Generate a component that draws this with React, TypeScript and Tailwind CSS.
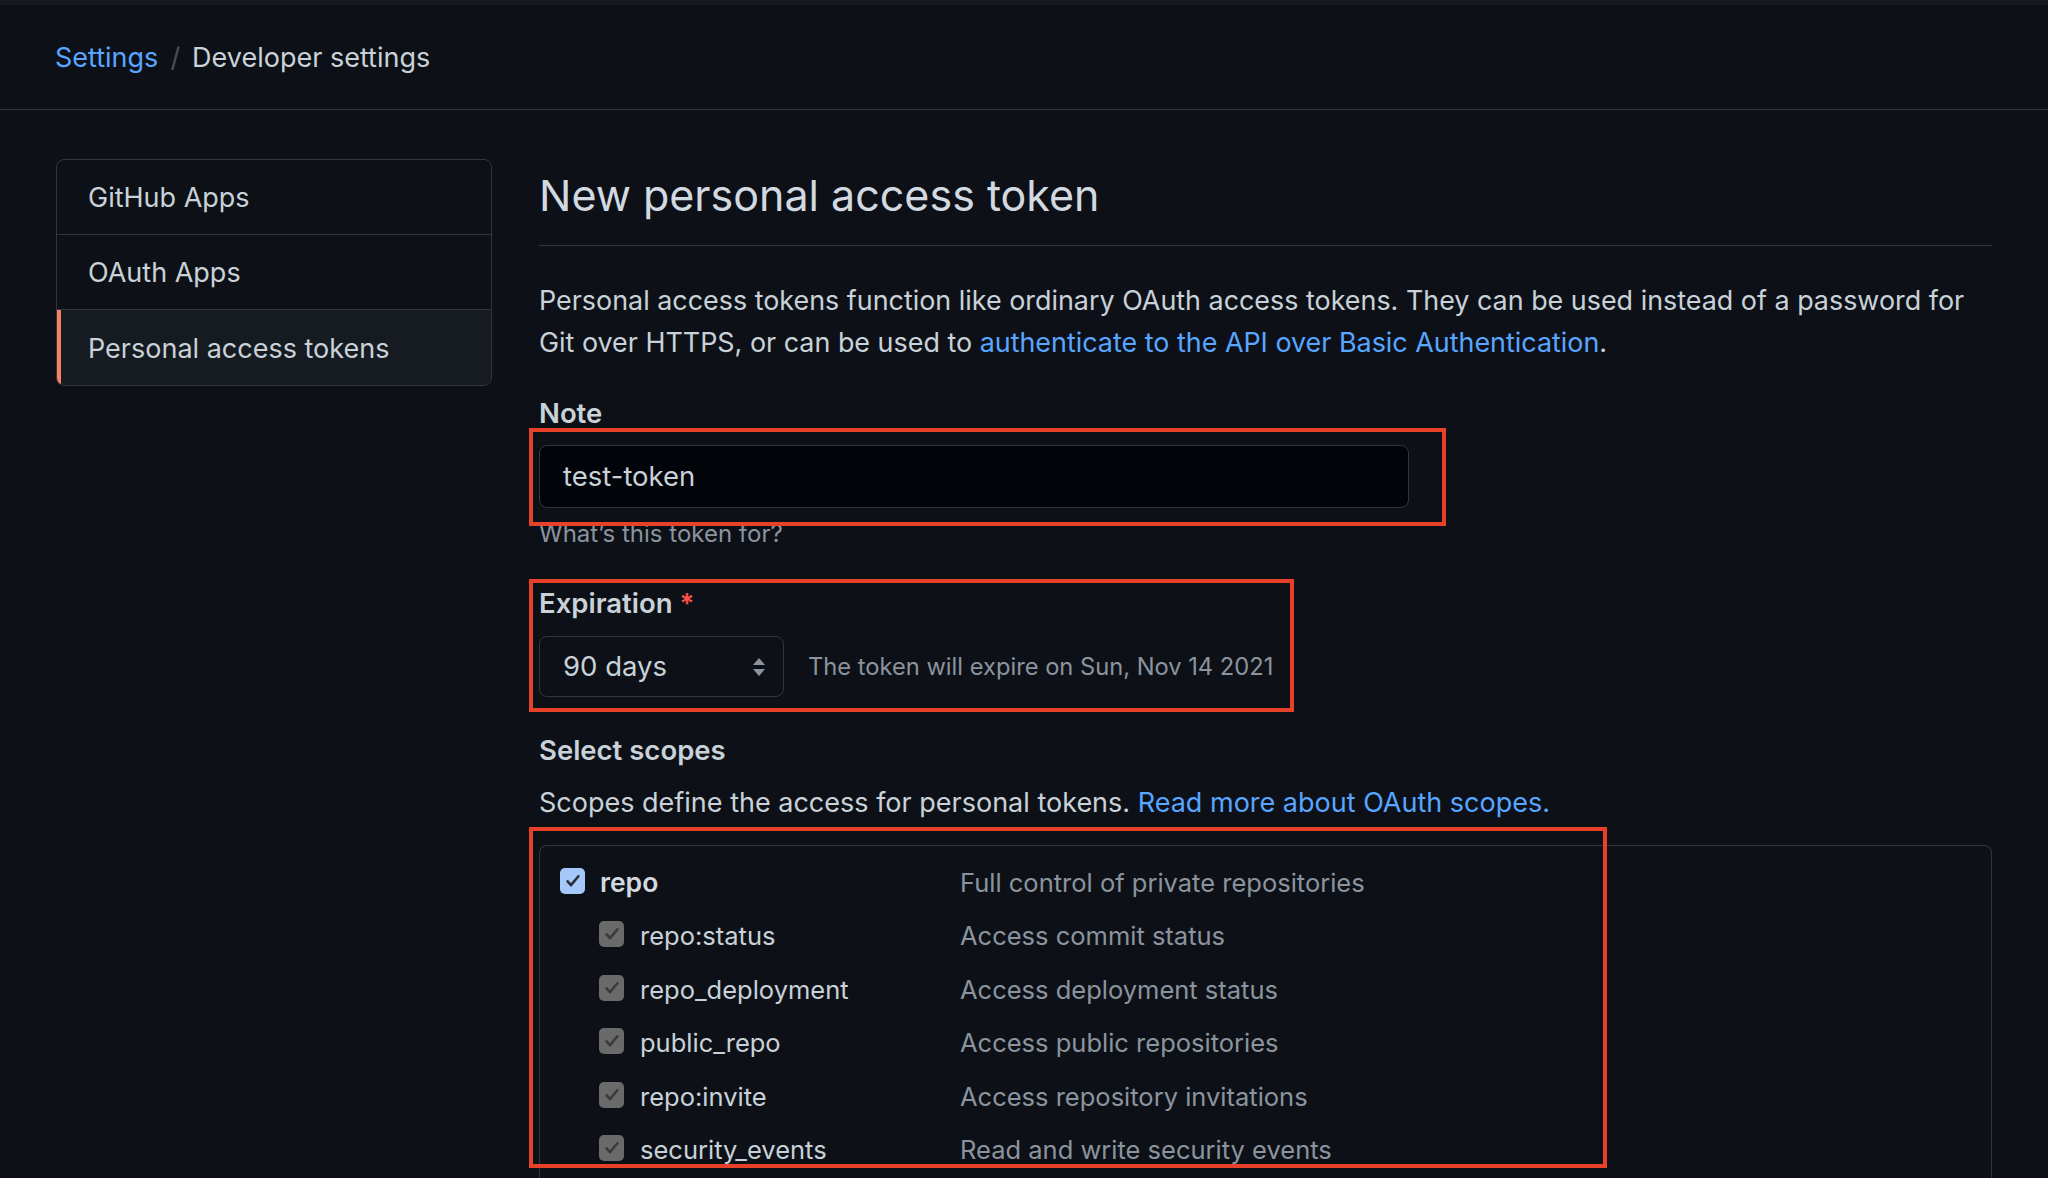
import React from "react";

const scopes = [
  { name: "repo:status", desc: "Access commit status" },
  { name: "repo_deployment", desc: "Access deployment status" },
  { name: "public_repo", desc: "Access public repositories" },
  { name: "repo:invite", desc: "Access repository invitations" },
  { name: "security_events", desc: "Read and write security events" },
];

function Check({ main }: { main?: boolean }) {
  return (
    <span
      className={`mb-[4px] flex h-[26px] w-[25px] shrink-0 items-center justify-center rounded-[5px] ${
        main ? "bg-[#a5c8fa]" : "bg-[#6a6a6a]"
      }`}
    >
      <svg width="18" height="18" viewBox="0 0 16 16" fill="none">
        <path
          d="M3.2 8.3l3 3.4L12.8 3.8"
          stroke={main ? "#2b2f36" : "#3b3b3b"}
          strokeWidth="2.3"
          strokeLinecap="round"
          strokeLinejoin="round"
        />
      </svg>
    </span>
  );
}

export default function App() {
  return (
    <div className="relative min-h-screen bg-[#0d1117] text-[#c9d1d9] font-['Inter',sans-serif]">
      <header className="h-[110px] border-t-[5px] border-b border-t-[#171b21] border-b-[#30363d] flex items-center px-[55px] pt-[3px] text-[27px]">
        <a className="text-[#58a6ff]">Settings</a>
        <span className="mx-[12px] text-[#484f58]">/</span>
        <span className="text-[#c9d1d9]">Developer settings</span>
      </header>

      <main className="flex gap-[47px] px-[56px] pt-[49px]">
        <nav className="w-[436px] shrink-0 self-start overflow-hidden rounded-[8px] border border-[#30363d] text-[27px]">
          <div className="flex h-[75px] items-center border-b border-[#30363d] pl-[31px] pt-[3px]">GitHub Apps</div>
          <div className="flex h-[75px] items-center border-b border-[#30363d] pl-[31px] pt-[3px]">OAuth Apps</div>
          <div className="flex h-[75px] items-center border-l-[4px] border-[#f78166] bg-[#161b22] pl-[27px] pt-[3px]">
            Personal access tokens
          </div>
        </nav>

        <section className="flex-1">
          <h1 className="mt-[8px] border-b border-[#30363d] pb-[22px] text-[43px] font-normal leading-[56px] text-[#d2d9e0]">
            New personal access token
          </h1>

          <p className="mt-[33px] text-[26.9px] leading-[42px]">
            Personal access tokens function like ordinary OAuth access tokens. They can be used instead of a password for
            Git over HTTPS, or can be used to{" "}
            <a className="text-[#58a6ff]">authenticate to the API over Basic Authentication</a>.
          </p>

          <div className="mt-[35px] text-[27.5px] font-semibold leading-[30px]">Note</div>
          <div className="mt-[17px] flex h-[63px] w-[870px] items-center rounded-[8px] border border-[#30363d] bg-[#010409] px-[23px] text-[27.5px]">
            test-token
          </div>
          <div className="mt-[11px] text-[24px] leading-[30px] text-[#8b949e]">What’s this token for?</div>

          <div className="mt-[39px] text-[27.5px] font-semibold leading-[30px]">
            Expiration <span className="text-[#f85149]">*</span>
          </div>
          <div className="mt-[18px] flex items-center gap-[24px]">
            <div className="flex h-[61px] w-[245px] items-center justify-between rounded-[8px] border border-[#30363d] bg-[#0d1117] pl-[23px] pr-[17px] text-[27.5px]">
              <span>90 days</span>
              <svg width="14" height="22" viewBox="0 0 14 22">
                <path d="M7 2L13 9H1z" fill="#8b949e" />
                <path d="M7 20L1 13h12z" fill="#8b949e" />
              </svg>
            </div>
            <span className="text-[23.7px] text-[#8b949e]">The token will expire on Sun, Nov 14 2021</span>
          </div>

          <div className="mt-[38px] text-[27.5px] font-semibold leading-[30px]">Select scopes</div>
          <p className="mt-[23px] text-[27px] leading-[30px]">
            Scopes define the access for personal tokens.{" "}
            <a className="text-[#58a6ff]">Read more about OAuth scopes.</a>
          </p>

          <div className="mt-[27px] h-[360px] rounded-t-[8px] border border-b-0 border-[#30363d] pl-[20px] pt-[10px] text-[25.5px]">
            <div className="flex h-[53.5px] items-center">
              <div className="flex w-[400px] items-center gap-[15px]">
                <Check main />
                <span className="text-[26.5px] font-semibold text-[#d2d9e0]">repo</span>
              </div>
              <span className="text-[#8b949e]">Full control of private repositories</span>
            </div>
            {scopes.map((s) => (
              <div key={s.name} className="flex h-[53.5px] items-center">
                <div className="flex w-[400px] items-center gap-[16px] pl-[39px]">
                  <Check />
                  <span>{s.name}</span>
                </div>
                <span className="text-[#8b949e]">{s.desc}</span>
              </div>
            ))}
          </div>
        </section>
      </main>

      {/* red annotation boxes */}
      <div className="pointer-events-none absolute left-[529px] top-[428px] h-[98px] w-[917px] border-[4px] border-[#e8412a]" />
      <div className="pointer-events-none absolute left-[529px] top-[579px] h-[133px] w-[765px] border-[4px] border-[#e8412a]" />
      <div className="pointer-events-none absolute left-[529px] top-[827px] h-[341px] w-[1078px] border-[4px] border-[#e8412a]" />
    </div>
  );
}
